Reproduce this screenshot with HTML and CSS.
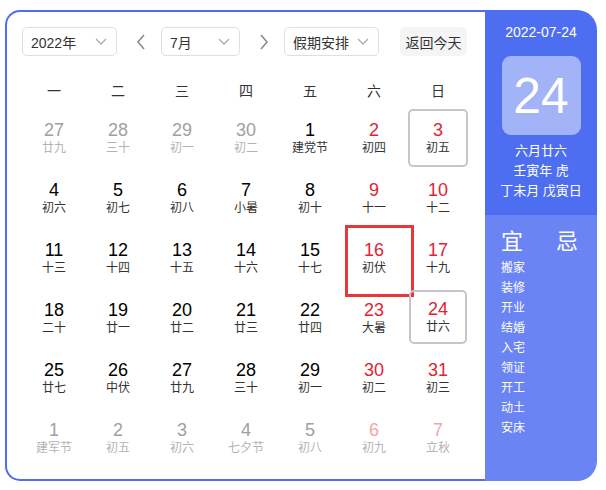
FILE: index.html
```html
<!DOCTYPE html>
<html lang="zh">
<head>
<meta charset="utf-8">
<link rel="stylesheet" href="styles.css">
</head>
<body>
<div class="cal">
  <div class="main">
    <div class="toolbar">
      <div class="select w95"><span>2022年</span><svg class="chev" viewBox="0 0 12 8" width="12" height="8"><polyline points="1,1 6,6 11,1"/></svg></div>
      <div class="arrow"><svg viewBox="0 0 10 16" width="10" height="16"><polyline points="8,1 2,8 8,15"/></svg></div>
      <div class="select w79"><span>7月</span><svg class="chev" viewBox="0 0 12 8" width="12" height="8"><polyline points="1,1 6,6 11,1"/></svg></div>
      <div class="arrow"><svg viewBox="0 0 10 16" width="10" height="16"><polyline points="2,1 8,8 2,15"/></svg></div>
      <div class="select w95"><span>假期安排</span><svg class="chev" viewBox="0 0 12 8" width="12" height="8"><polyline points="1,1 6,6 11,1"/></svg></div>
      <div class="btn">返回今天</div>
    </div>
    <div class="weekdays">
      <span>一</span><span>二</span><span>三</span><span>四</span><span>五</span><span>六</span><span>日</span>
    </div>
    <div class="grid">
      <div class="cell other"><b>27</b><i>廿九</i></div>
      <div class="cell other"><b>28</b><i>三十</i></div>
      <div class="cell other"><b>29</b><i>初一</i></div>
      <div class="cell other"><b>30</b><i>初二</i></div>
      <div class="cell"><b>1</b><i>建党节</i></div>
      <div class="cell red"><b>2</b><i>初四</i></div>
      <div class="cell red boxed"><b>3</b><i>初五</i></div>

      <div class="cell"><b>4</b><i>初六</i></div>
      <div class="cell"><b>5</b><i>初七</i></div>
      <div class="cell"><b>6</b><i>初八</i></div>
      <div class="cell"><b>7</b><i>小暑</i></div>
      <div class="cell"><b>8</b><i>初十</i></div>
      <div class="cell red"><b>9</b><i>十一</i></div>
      <div class="cell red"><b>10</b><i>十二</i></div>

      <div class="cell"><b>11</b><i>十三</i></div>
      <div class="cell"><b>12</b><i>十四</i></div>
      <div class="cell"><b>13</b><i>十五</i></div>
      <div class="cell"><b>14</b><i>十六</i></div>
      <div class="cell"><b>15</b><i>十七</i></div>
      <div class="cell red hot"><b>16</b><i>初伏</i></div>
      <div class="cell red"><b>17</b><i>十九</i></div>

      <div class="cell"><b>18</b><i>二十</i></div>
      <div class="cell"><b>19</b><i>廿一</i></div>
      <div class="cell"><b>20</b><i>廿二</i></div>
      <div class="cell"><b>21</b><i>廿三</i></div>
      <div class="cell"><b>22</b><i>廿四</i></div>
      <div class="cell red"><b>23</b><i>大暑</i></div>
      <div class="cell red boxed today"><b>24</b><i>廿六</i></div>

      <div class="cell"><b>25</b><i>廿七</i></div>
      <div class="cell"><b>26</b><i>中伏</i></div>
      <div class="cell"><b>27</b><i>廿九</i></div>
      <div class="cell"><b>28</b><i>三十</i></div>
      <div class="cell"><b>29</b><i>初一</i></div>
      <div class="cell red"><b>30</b><i>初二</i></div>
      <div class="cell red"><b>31</b><i>初三</i></div>

      <div class="cell other"><b>1</b><i>建军节</i></div>
      <div class="cell other"><b>2</b><i>初五</i></div>
      <div class="cell other"><b>3</b><i>初六</i></div>
      <div class="cell other"><b>4</b><i>七夕节</i></div>
      <div class="cell other"><b>5</b><i>初八</i></div>
      <div class="cell other red"><b>6</b><i>初九</i></div>
      <div class="cell other red"><b>7</b><i>立秋</i></div>
    </div>
  </div>
  <div class="side">
    <div class="side-top">
      <div class="date">2022-07-24</div>
      <div class="bigday">24</div>
      <div class="lunar">六月廿六</div>
      <div class="lunar">壬寅年 虎</div>
      <div class="lunar">丁未月 戊寅日</div>
    </div>
    <div class="side-bottom">
      <div class="yiji"><span>宜</span><span>忌</span></div>
      <ul class="items">
        <li>搬家</li><li>装修</li><li>开业</li><li>结婚</li><li>入宅</li><li>领证</li><li>开工</li><li>动土</li><li>安床</li>
      </ul>
    </div>
  </div>
</div>
</body>
</html>
```
FILE: styles.css
```css
* { box-sizing: border-box; }
html, body { margin: 0; padding: 0; background: #fff; }
body {
  font-family: "Liberation Sans", "Noto Sans CJK SC", sans-serif;
  color: #333;
}
.cal {
  display: flex;
  margin: 10px 0 0 5px;
  width: 592px;
  height: 471px;
}
.main {
  width: 480px;
  height: 471px;
  border: 2px solid #4e6ef2;
  border-right: none;
  border-radius: 15px 0 0 15px;
  padding: 15px 0 0 15px;
}
.toolbar {
  display: flex;
  align-items: center;
  height: 29px;
}
.select {
  height: 29px;
  border: 1px solid #dcdfe6;
  border-radius: 5px;
  display: flex;
  align-items: center;
  justify-content: space-between;
  padding: 0 9px 0 8px;
  font-size: 14px;
  color: #333;
}
.w95 { width: 95px; }
.w79 { width: 79px; }
.chev { fill: none; stroke: #a8abb2; stroke-width: 1.3; }
.arrow {
  width: 44px;
  display: flex;
  justify-content: center;
  padding-left: 3px;
}
.arrow svg { fill: none; stroke: #888; stroke-width: 1.5; }
.btn {
  margin-left: 21px;
  width: 67px;
  height: 29px;
  background: #f5f5f5;
  border-radius: 5px;
  font-size: 14px;
  display: flex;
  align-items: center;
  justify-content: center;
  color: #333;
}
.weekdays {
  display: grid;
  grid-template-columns: repeat(7, 64px);
  height: 36px;
  margin-top: 16px;
  align-items: center;
  font-size: 14px;
  color: #333;
}
.weekdays span { text-align: center; }
.grid {
  display: grid;
  grid-template-columns: repeat(7, 64px);
  grid-auto-rows: 60px;
}
.cell {
  position: relative;
  margin: 1px 2px;
  border: 2px solid transparent;
  border-radius: 5px;
  display: flex;
  flex-direction: column;
  align-items: center;
  justify-content: center;
}
.cell b {
  font-weight: normal;
  font-size: 18px;
  line-height: 20px;
  color: #000;
}
.cell i {
  font-style: normal;
  font-size: 12px;
  line-height: 17px;
  color: #333;
}
.cell.red b { color: #e02433; }
.cell.other b { color: #a0a0a0; }
.cell.other i { color: #b4b4b4; }
.cell.other.red b { color: #f0a6a8; }
.boxed { border-color: #c4c6cc; }
.today { margin: 2px 3px 4px 3px; }
.hot::after {
  content: "";
  position: absolute;
  left: -1px;
  top: -6px;
  right: -12px;
  bottom: -12px;
  border: 3px solid #e8363b;
}
.side {
  width: 112px;
  height: 471px;
  border-radius: 0 20px 20px 0;
  overflow: hidden;
  display: flex;
  flex-direction: column;
  color: #fff;
}
.side-top {
  background: #4e6ef2;
  height: 205px;
  display: flex;
  flex-direction: column;
  align-items: center;
  padding-top: 12px;
}
.date { font-size: 14px; line-height: 20px; }
.bigday {
  margin-top: 14px;
  width: 79px;
  height: 79px;
  border-radius: 9px;
  background: #a2b3f8;
  font-size: 50px;
  display: flex;
  align-items: center;
  justify-content: center;
  margin-bottom: 6px;
}
.lunar { font-size: 13px; line-height: 20px; }
.side-bottom {
  flex: 1;
  background: #6a84f4;
  padding: 13px 0 0 16px;
}
.yiji {
  display: flex;
  gap: 33px;
  font-size: 22px;
  line-height: 28px;
  padding-left: 0;
}
.items {
  list-style: none;
  margin: 2px 0 0 0;
  padding: 0;
  font-size: 12px;
  line-height: 20px;
  font-weight: normal;
}
```
